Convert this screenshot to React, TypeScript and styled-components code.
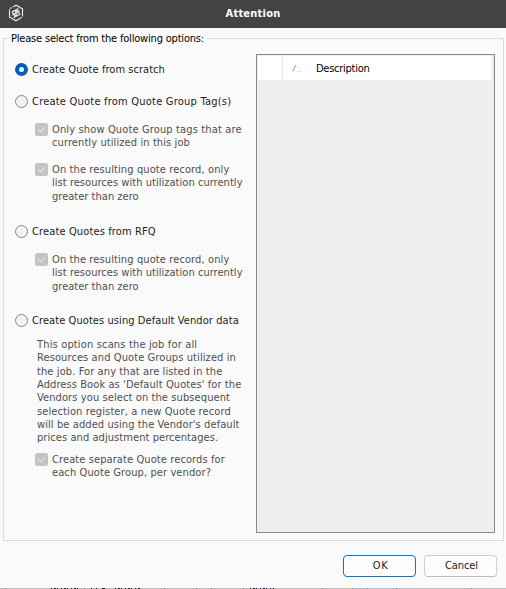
import React from 'react';
import styled, { createGlobalStyle } from 'styled-components';

const GlobalStyle = createGlobalStyle`
  * { box-sizing: border-box; }
  body { margin: 0; background: #fafafa; overflow: hidden; }
`;

const Dialog = styled.main`
  width: 506px;
  height: 589px;
  display: flex;
  flex-direction: column;
  background: #fafafa;
  color: #000;
  font: 11px/13.33px 'DejaVu Sans Condensed', 'DejaVu Sans', sans-serif;
`;

const TitleBar = styled.header`
  flex: none;
  height: 28px;
  display: grid;
  grid-template-columns: 32px 1fr 32px;
  align-items: center;
  background: #434343;
  color: #fff;
`;

const Logo = styled.svg`
  width: 16px;
  height: 18px;
  margin-left: 8px;
  margin-top: -2px;
`;

const Title = styled.h1`
  margin: 0;
  font-size: 11px;
  font-weight: bold;
  letter-spacing: 0.23px;
  text-align: center;
`;

const Group = styled.fieldset`
  flex: none;
  width: 501px;
  height: 510px;
  margin: 3px 0 0 3px;
  padding: 0 8px 0 11px;
  border: 1px solid #dcdcdc;
  min-width: 0;
`;

const Legend = styled.legend`
  height: 14px;
  margin-left: -5px;
  padding: 0.5px 3px 0 1px;
  white-space: nowrap;
`;

const Columns = styled.div`
  display: grid;
  grid-template-columns: 241px 239px;
  height: 487px;
`;

const Options = styled.div`
  padding-top: 17.5px;
`;

const Line = styled.span<{ $spacing: number }>`
  display: block;
  white-space: nowrap;
  letter-spacing: ${(p) => p.$spacing}px;
`;

const Option = styled.label<{ $gap?: number }>`
  display: flex;
  align-items: flex-start;
  height: 14px;
  margin-top: ${(p) => p.$gap ?? 0}px;
  gap: 4px;
  color: #1c1c1c;
`;

const OptionText = styled(Line)`
  padding-top: 0.4px;
`;

const Radio = styled.span<{ $checked?: boolean }>`
  flex: none;
  width: 13px;
  height: 13px;
  border-radius: 50%;
  border: ${(p) => (p.$checked ? '4px solid #005fb8' : '1px solid #858585')};
  background: ${(p) => (p.$checked ? '#fff' : '#f3f3f3')};
`;

const CheckOption = styled.label<{ $gap: number }>`
  display: flex;
  margin: ${(p) => p.$gap}px 0 0 20px;
  gap: 4px;
  color: #4f4f4f;
`;

const CheckBox = styled.span`
  flex: none;
  display: flex;
  width: 13px;
  height: 13px;
  border-radius: 2px;
  background: #c3c3c3;
`;

const Note = styled.div`
  margin: 10px 0 0 22px;
  color: #4f4f4f;
`;

const Table = styled.section`
  height: 479px;
  margin-top: 9px;
  padding: 1px;
  border: 1px solid #828790;
  background: #efefef;
`;

const TableHead = styled.div`
  display: grid;
  grid-template-columns: 25px 33px 1fr;
  align-items: center;
  width: 235px;
  height: 24px;
  background: #fff;
  border-right: 1px solid #e5e5e5;
`;

const MarkerCell = styled.div`
  height: 100%;
  border-right: 1px solid #e5e5e5;
`;

const SortIcon = styled.svg`
  width: 10px;
  height: 8px;
  margin-left: 9px;
`;

const HeadText = styled(Line)`
  padding-top: 1.4px;
`;

const Actions = styled.footer`
  display: flex;
  gap: 8px;
  margin: 14px 9px 0 auto;
`;

const Button = styled.button<{ $primary?: boolean }>`
  width: 73px;
  height: 22px;
  padding: 0;
  border: 1px solid ${(p) => (p.$primary ? '#0078d4' : '#d0d0d0')};
  border-bottom-color: ${(p) => (p.$primary ? '#0078d4' : '#bcbcbc')};
  border-radius: 4px;
  background: #fdfdfd;
  color: #1c1c1c;
  font: inherit;
`;

const Label = styled.span<{ $spacing: number }>`
  padding-left: 2px;
  letter-spacing: ${(p) => p.$spacing}px;
`;

const Backdrop = styled.svg`
  display: block;
  flex: none;
  width: 506px;
  height: 1px;
  margin-top: auto;
  background: #c0c0c0;
`;

type TextLine = [text: string, spacing: number];

const utilization: TextLine[] = [
  ['On the resulting quote record, only', 0.11],
  ['list resources with utilization currently', 0.04],
  ['greater than zero', 0.02],
];

const note: TextLine[] = [
  ['This option scans the job for all', 0.16],
  ['Resources and Quote Groups utilized in', 0.1],
  ['the job. For any that are listed in the', 0.1],
  ["Address Book as 'Default Quotes' for the", 0.09],
  ['Vendors you select on the subsequent', 0.1],
  ['selection register, a new Quote record', 0.11],
  ["will be added using the Vendor's default", 0.09],
  ['prices and adjustment percentages.', 0.07],
];

const Lines = ({ lines }: { lines: TextLine[] }) => (
  <div>
    {lines.map(([text, spacing]) => (
      <Line key={text} $spacing={spacing}>{text}</Line>
    ))}
  </div>
);

const Check = ({ gap, lines }: { gap: number; lines: TextLine[] }) => (
  <CheckOption $gap={gap}>
    <CheckBox>
      <svg width="13" height="13" viewBox="0 0 13 13" fill="none" stroke="#f6f6f6">
        <path d="M3.2 6.7 5.4 8.9 10 4.3" />
      </svg>
    </CheckBox>
    <Lines lines={lines} />
  </CheckOption>
);

export default function App() {
  return (
    <Dialog>
      <GlobalStyle />
      <TitleBar>
        <Logo viewBox="0 0 16 18" fill="none" stroke="#ededed" strokeWidth="1.1">
          <path d="M5 2.9 8 1.2l6.5 3.6v7.6M13.8 13.4 8 16.8l-6.5-3.6V5.6M2.2 4.5 3.8 3.6" />
          <path d="M10.6 4.4 4.3 7.7v1.2l2.2.8 5.2-2.9M6.8 7.9l3.2-1.7M4.3 11.3l5.2-2.8 2.2.8v1.2l-6.3 3.3M6 12.1l3.2-1.7" />
        </Logo>
        <Title>Attention</Title>
      </TitleBar>
      <Group>
        <Legend><Line $spacing={-0.19}>Please select from the following options:</Line></Legend>
        <Columns>
          <Options>
            <Option><Radio $checked /><OptionText $spacing={0.05}>Create Quote from scratch</OptionText></Option>
            <Option $gap={18}><Radio /><OptionText $spacing={0.22}>Create Quote from Quote Group Tag(s)</OptionText></Option>
            <Check gap={14.5} lines={[['Only show Quote Group tags that are', 0.14], ['currently utilized in this job', 0.1]]} />
            <Check gap={13.3} lines={utilization} />
            <Option $gap={22}><Radio /><OptionText $spacing={0.13}>Create Quotes from RFQ</OptionText></Option>
            <Check gap={14} lines={utilization} />
            <Option $gap={21}><Radio /><OptionText $spacing={0.08}>Create Quotes using Default Vendor data</OptionText></Option>
            <Note><Lines lines={note} /></Note>
            <Check gap={8} lines={[['Create separate Quote records for', 0.1], ['each Quote Group, per vendor?', 0.1]]} />
          </Options>
          <Table>
            <TableHead>
              <MarkerCell />
              <SortIcon viewBox="0 0 10 8" fill="none">
                <path d="M.5 7.5 4 1" stroke="#b4b4b4" strokeWidth="1.3" />
                <path d="M5 2 9 7.5H3.5" stroke="#e8e8e8" />
              </SortIcon>
              <HeadText $spacing={-0.26}>Description</HeadText>
            </TableHead>
          </Table>
        </Columns>
      </Group>
      <Actions>
        <Button $primary><Label $spacing={0.5}>OK</Label></Button>
        <Button><Label $spacing={-0.08}>Cancel</Label></Button>
      </Actions>
      <Backdrop viewBox="0 0 506 1" fill="none">
        <path d="M5 .5h1M84 .5h1M164 .5h1M196 .5h1M211 .5h1M243 .5h1M322 .5h1M352 .5h1M367 .5h1M396 .5h1M471 .5h1" stroke="#8c8c8c" />
        <path d="M51 .5h28M115 .5h25M250 .5h24" stroke="#20203c" strokeDasharray="1 2 2 1 1 3" />
        <path d="M91 .5h1M96 .5h1M102 .5h3" stroke="#20203c" />
      </Backdrop>
    </Dialog>
  );
}
